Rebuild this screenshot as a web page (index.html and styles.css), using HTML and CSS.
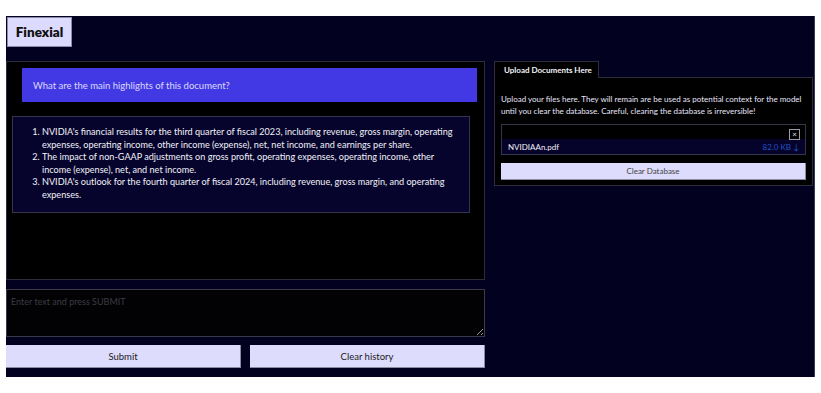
FILE: index.html
```html
<!DOCTYPE html>
<html lang="en">
<head>
  <meta charset="UTF-8">
  <meta name="viewport" content="width=device-width, initial-scale=1.0">
  <title>Finexial</title>
  <link rel="stylesheet" href="styles.css">
</head>
<body>
  <div class="app">
    <header class="top">
      <div class="brand">Finexial</div>
    </header>
    <div class="main">
      <div class="chat-col">
        <div class="chatbot">
          <div class="msg-user">What are the main highlights of this document?</div>
          <div class="msg-bot">
            <ol>
              <li>NVIDIA's financial results for the third quarter of fiscal 2023, including revenue, gross margin, operating expenses, operating income, other income (expense), net, net income, and earnings per share.</li>
              <li>The impact of non-GAAP adjustments on gross profit, operating expenses, operating income, other income (expense), net, and net income.</li>
              <li>NVIDIA's outlook for the fourth quarter of fiscal 2024, including revenue, gross margin, and operating expenses.</li>
            </ol>
          </div>
        </div>
        <textarea class="prompt" placeholder="Enter text and press SUBMIT"></textarea>
        <div class="actions">
          <button class="btn">Submit</button>
          <button class="btn">Clear history</button>
        </div>
      </div>
      <div class="side-col">
        <div class="tabs">
          <div class="tab">Upload Documents Here</div>
        </div>
        <div class="tab-panel">
          <p class="note">Upload your files here. They will remain are be used as potential context for the model until you clear the database. Careful, clearing the database is irreversible!</p>
          <div class="files">
            <div class="files-top"><span class="close">&times;</span></div>
            <div class="file-row">
              <span>NVIDIAAn.pdf</span>
              <span class="size">82.0 KB &darr;</span>
            </div>
          </div>
          <button class="btn btn-clear">Clear Database</button>
        </div>
      </div>
    </div>
  </div>
</body>
</html>
```

FILE: styles.css
```css
* { margin:0; padding:0; box-sizing:border-box; }
body {
  background: #fff;
  font-family: Lato, "Noto Sans", sans-serif;
  padding: 16px 6px 16px 6px;
}
.app {
  width: 809px;
  height: 361px;
  background: #02011f;
  border-right: 1px solid #3a3a55;
  display: flex;
  flex-direction: column;
}
.top {
  height: 45px;
  padding: 1px 0 0 1px;
}
.brand {
  width: 65px;
  height: 30px;
  background: #dcdafd;
  border: 1px solid #8c8ca8;
  color: #111;
  font-weight: 800;
  font-size: 13.5px;
  display: flex;
  align-items: center;
  justify-content: center;
}
.main {
  display: flex;
  gap: 9px;
}
.chat-col {
  width: 479px;
  display: flex;
  flex-direction: column;
}
.chatbot {
  height: 219px;
  background: #000;
  border: 1px solid #2c2c3c;
  padding: 6px 7px 0 5px;
}
.msg-user {
  margin-left: 10px;
  height: 34px;
  background: #4339e4;
  color: #dcdafd;
  font-size: 9.5px;
  padding: 0 11px;
  display: flex;
  align-items: center;
}
.msg-bot {
  margin-top: 14px;
  width: 458px;
  background: #06042c;
  border: 1px solid #34344a;
  color: #f2f2f8;
  font-size: 9.1px;
  line-height: 12.6px;
  padding: 9px 10px 10px 16px;
}
.msg-bot ol { padding-left: 13px; }
.prompt {
  margin-top: 9px;
  height: 48px;
  background: #020205;
  border: 1px solid #3a3a48;
  color: #ccc;
  font-family: Lato, sans-serif;
  font-size: 9px;
  padding: 6px 4px;
  resize: vertical;
}
.prompt::placeholder { color: #3c3c44; }
.actions {
  margin-top: 8px;
  display: flex;
  gap: 9px;
}
.btn {
  flex: 1;
  height: 23px;
  background: #dedcfd;
  border: none;
  border-right: 1px solid #8a8aa0;
  border-bottom: 1px solid #8a8aa0;
  color: #1a1a22;
  font-family: Lato, sans-serif;
  font-size: 9.5px;
}
.side-col {
  width: 319px;
  display: flex;
  flex-direction: column;
}
.tabs { display: flex; }
.tab {
  width: 105px;
  height: 17px;
  background: #000;
  border: 1px solid #2c2c3c;
  border-bottom: none;
  color: #f2f2f8;
  font-size: 8px;
  font-weight: 700;
  padding: 3px 0 0 9px;
  position: relative;
  z-index: 1;
  margin-bottom: -1px;
}
.tab-panel {
  background: #000;
  border: 1px solid #2c2c3c;
  padding: 16px 6px 5px 6px;
}
.note {
  color: #e8e6fa;
  font-size: 8px;
  line-height: 11.5px;
}
.files {
  margin-top: 7px;
  border: 1px solid #34344a;
}
.files-top {
  height: 13px;
  display: flex;
  justify-content: flex-end;
  padding: 4px 5px 0 0;
}
.close {
  width: 11px;
  height: 11px;
  border: 1px solid #9a9aa8;
  color: #e0e0e8;
  font-size: 8px;
  line-height: 9px;
  text-align: center;
}
.file-row {
  height: 15px;
  margin-top: 1px;
  background: #05032a;
  color: #f2f2f8;
  font-size: 8px;
  display: flex;
  align-items: center;
  justify-content: space-between;
  padding: 0 6px 0 6px;
}
.size { color: #2450c8; }
.btn-clear {
  width: 100%;
  height: 17px;
  margin-top: 8px;
  font-size: 8px;
  color: #444;
}
```
